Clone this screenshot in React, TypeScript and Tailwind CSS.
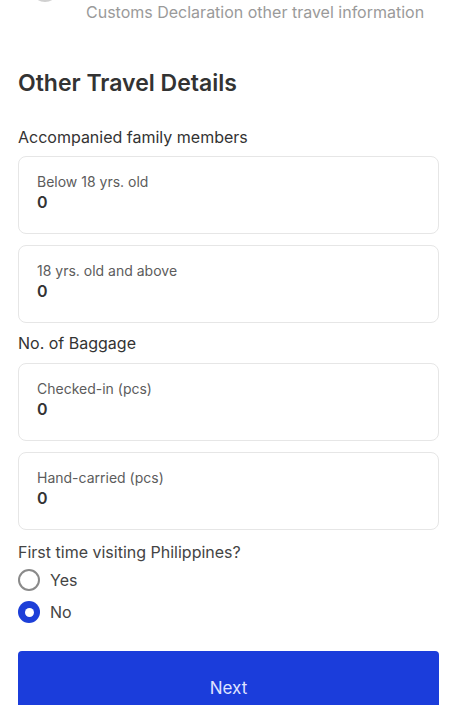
import React from 'react';

const font = { fontFamily: 'Inter, "Noto Sans", sans-serif' };

interface FieldProps {
  label: string;
  value: string;
}

const CountField: React.FC<FieldProps> = ({ label, value }) => (
  <div className="h-[78px] rounded-lg border border-[#e6e6e6] bg-white px-[18px] pt-[16px]">
    <p className="text-[14px] leading-[17px] text-[#5c5c5c]">{label}</p>
    <p className="mt-[3px] text-[16px] font-semibold leading-[19px] text-[#333]">{value}</p>
  </div>
);

const Radio: React.FC<{ label: string; checked?: boolean }> = ({ label, checked }) => (
  <label className="flex items-center gap-[10px]">
    {checked ? (
      <span className="flex h-[22px] w-[22px] items-center justify-center rounded-full bg-[#1d3fd8]">
        <span className="h-[9px] w-[9px] rounded-full bg-white" />
      </span>
    ) : (
      <span className="h-[22px] w-[22px] rounded-full border-2 border-[#8a8a8a]" />
    )}
    <span className="text-[16px] text-[#444]">{label}</span>
  </label>
);

export default function App() {
  return (
    <div className="relative h-[705px] w-[450px] overflow-hidden bg-white" style={font}>
      {/* step indicator, scrolled off the top */}
      <div className="absolute left-[31px] top-[-26px] h-[28px] w-[28px] rounded-full border-2 border-[#d0d0d0]" />

      <p className="pl-[86px] pt-[2px] text-[16px] leading-[20px] text-[#9a9a9a]">
        Customs Declaration other travel information
      </p>

      <div className="pl-[18px] pr-[11px]">
        <h1 className="mt-[47px] text-[23px] font-semibold leading-[28px] text-[#333]">
          Other Travel Details
        </h1>

        <p className="mt-[30px] text-[16px] leading-[20px] text-[#333]">Accompanied family members</p>
        <div className="mt-[9px] flex flex-col gap-[11px]">
          <CountField label="Below 18 yrs. old" value="0" />
          <CountField label="18 yrs. old and above" value="0" />
        </div>

        <p className="mt-[10px] text-[16px] leading-[20px] text-[#333]">No. of Baggage</p>
        <div className="mt-[10px] flex flex-col gap-[11px]">
          <CountField label="Checked-in (pcs)" value="0" />
          <CountField label="Hand-carried (pcs)" value="0" />
        </div>

        <p className="mt-[12px] text-[16px] leading-[20px] text-[#444]">First time visiting Philippines?</p>
        <div className="mt-[6px] flex flex-col gap-[8px]">
          <Radio label="Yes" />
          <Radio label="No" checked />
        </div>

        <button className="mt-[27px] h-[70px] w-full rounded-[4px] bg-[#1b3ddb] pt-[6px] text-[17px] text-[#dfe3ff]">
          Next
        </button>
      </div>
    </div>
  );
}
